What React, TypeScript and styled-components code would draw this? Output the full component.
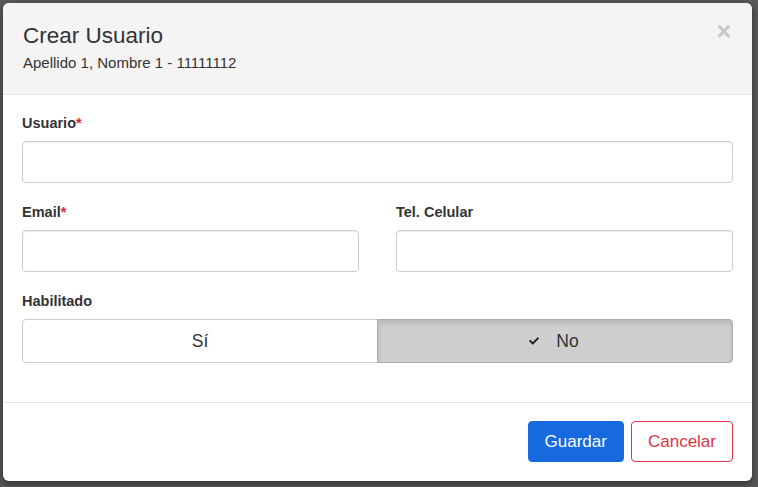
import React, { useState } from "react";
import styled, { createGlobalStyle } from "styled-components";
import { FaCheck } from "react-icons/fa";

const GlobalStyle = createGlobalStyle`
  html, body {
    margin: 0;
    padding: 0;
    background: #5a5a5a;
    font-family: "Liberation Sans", Arial, sans-serif;
    color: #333333;
  }
  * { box-sizing: border-box; }
`;

const Page = styled.div`
  width: 758px;
  height: 487px;
  padding: 3px 6px 6px 3px;
  background: #5a5a5a;
`;

const Modal = styled.div`
  width: 749px;
  height: 478px;
  background: #ffffff;
  border-radius: 6px;
  overflow: hidden;
  box-shadow: 0 3px 9px rgba(0, 0, 0, 0.5);
  display: flex;
  flex-direction: column;
`;

const Header = styled.div`
  background: #f4f4f4;
  border-bottom: 1px solid #e5e5e5;
  padding: 19px 21px 21px 20px;
  display: flex;
  justify-content: space-between;
  align-items: flex-start;
`;

const Title = styled.h4`
  margin: 0;
  font-size: 22.5px;
  font-weight: 400;
  line-height: 28px;
  color: #333333;
`;

const Subtitle = styled.div`
  margin-top: 3px;
  font-size: 15px;
  line-height: 20px;
  color: #333333;
`;

const Close = styled.button`
  border: 0;
  background: none;
  padding: 0;
  margin-top: -3px;
  font-family: "Liberation Sans", Arial, sans-serif;
  font-size: 25px;
  font-weight: 700;
  line-height: 1;
  color: #c6c6c6;
  cursor: pointer;
`;

const Body = styled.div`
  padding: 18px 19px 39px 19px;
  border-bottom: 1px solid #e5e5e5;
`;

const Group = styled.div<{ $last?: boolean }>`
  margin-bottom: ${(p) => (p.$last ? "0" : "19px")};
`;

const Row = styled.div`
  display: grid;
  grid-template-columns: 1fr 1fr;
  column-gap: 37px;
`;

const Label = styled.label`
  display: block;
  font-size: 14.5px;
  font-weight: 700;
  line-height: 20px;
  margin-bottom: 8px;
  color: #333333;
`;

const Required = styled.span`
  color: #e0242f;
`;

const Input = styled.input`
  display: block;
  width: 100%;
  height: 42px;
  border: 1px solid #cccccc;
  border-radius: 4px;
  padding: 6px 12px;
  font-size: 15px;
  font-family: inherit;
  box-shadow: inset 0 1px 1px rgba(0, 0, 0, 0.075);
  outline: none;
`;

const Toggle = styled.div`
  display: flex;
  height: 44px;
`;

const ToggleOption = styled.button<{ $active: boolean; $side: "left" | "right" }>`
  flex: 1;
  display: flex;
  align-items: center;
  justify-content: center;
  gap: 17px;
  font-family: inherit;
  font-size: 17.5px;
  color: #333333;
  cursor: pointer;
  border: 1px solid ${(p) => (p.$active ? "#adadad" : "#cccccc")};
  background: ${(p) => (p.$active ? "#cfcfcf" : "#ffffff")};
  box-shadow: ${(p) => (p.$active ? "inset 0 3px 5px rgba(0, 0, 0, 0.125)" : "none")};
  border-radius: ${(p) => (p.$side === "left" ? "4px 0 0 4px" : "0 4px 4px 0")};
  margin-left: ${(p) => (p.$side === "right" ? "-1px" : "0")};
  padding: 0;
`;

const CheckIcon = styled(FaCheck)`
  width: 10px;
  height: 10px;
  color: #222222;
  margin-left: -2px;
`;

const Footer = styled.div`
  flex: 1;
  display: flex;
  justify-content: flex-end;
  align-items: flex-start;
  gap: 7px;
  padding: 18px 19px 0 19px;
`;

const Button = styled.button<{ $variant: "primary" | "danger" }>`
  height: 41px;
  padding: 0 16px;
  font-family: inherit;
  font-size: 17px;
  border-radius: 4px;
  cursor: pointer;
  border: 1px solid ${(p) => (p.$variant === "primary" ? "#1769e0" : "#dc3545")};
  background: ${(p) => (p.$variant === "primary" ? "#1769e0" : "#ffffff")};
  color: ${(p) => (p.$variant === "primary" ? "#ffffff" : "#dc3545")};
`;

export default function App() {
  const [enabled, setEnabled] = useState(false);

  return (
    <>
      <GlobalStyle />
      <Page>
        <Modal>
          <Header>
            <div>
              <Title>Crear Usuario</Title>
              <Subtitle>Apellido 1, Nombre 1 - 11111112</Subtitle>
            </div>
            <Close aria-label="Cerrar">×</Close>
          </Header>
          <Body>
            <Group>
              <Label>
                Usuario<Required>*</Required>
              </Label>
              <Input />
            </Group>
            <Group>
              <Row>
                <div>
                  <Label>
                    Email<Required>*</Required>
                  </Label>
                  <Input />
                </div>
                <div>
                  <Label>Tel. Celular</Label>
                  <Input />
                </div>
              </Row>
            </Group>
            <Group $last>
              <Label>Habilitado</Label>
              <Toggle>
                <ToggleOption $side="left" $active={enabled} onClick={() => setEnabled(true)}>
                  {enabled && <CheckIcon />}
                  Sí
                </ToggleOption>
                <ToggleOption $side="right" $active={!enabled} onClick={() => setEnabled(false)}>
                  {!enabled && <CheckIcon />}
                  No
                </ToggleOption>
              </Toggle>
            </Group>
          </Body>
          <Footer>
            <Button $variant="primary">Guardar</Button>
            <Button $variant="danger">Cancelar</Button>
          </Footer>
        </Modal>
      </Page>
    </>
  );
}
